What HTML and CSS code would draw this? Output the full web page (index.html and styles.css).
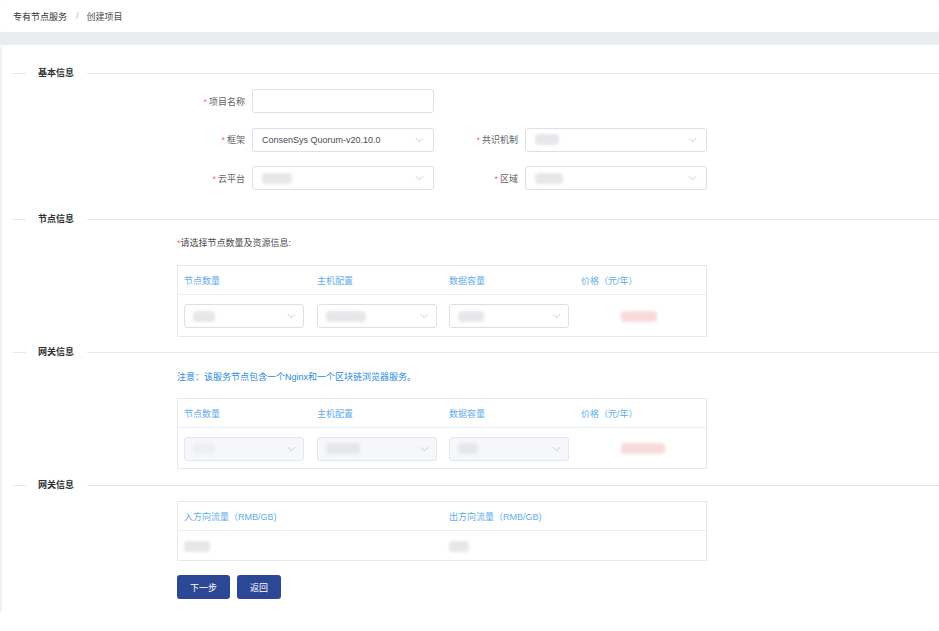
FILE: index.html
```html
<!DOCTYPE html>
<html lang="zh-CN">
<head>
<meta charset="utf-8">
<title>创建项目</title>
<link rel="stylesheet" href="styles.css">
</head>
<body>
<header class="crumb">
  <span class="crumb-a">专有节点服务</span>
  <span class="crumb-sep">/</span>
  <span class="crumb-b">创建项目</span>
</header>
<div class="strip"></div>
<main class="card">
  <div class="sec-title sec-1"><span>基本信息</span></div>

  <div class="form-row">
    <div class="field">
      <label class="lbl lbl-l"><i>*</i>项目名称</label>
      <div class="input"></div>
    </div>
  </div>
  <div class="form-row">
    <div class="field">
      <label class="lbl lbl-l"><i>*</i>框架</label>
      <div class="input select"><span class="val">ConsenSys Quorum-v20.10.0</span><svg class="arrow" viewBox="0 0 10 6"><polyline points="1,1 5,5 9,1"/></svg></div>
    </div>
    <div class="field">
      <label class="lbl lbl-r"><i>*</i>共识机制</label>
      <div class="input select"><span class="blob b-gray w24"></span><svg class="arrow" viewBox="0 0 10 6"><polyline points="1,1 5,5 9,1"/></svg></div>
    </div>
  </div>
  <div class="form-row">
    <div class="field">
      <label class="lbl lbl-l"><i>*</i>云平台</label>
      <div class="input select"><span class="blob b-gray w30"></span><svg class="arrow" viewBox="0 0 10 6"><polyline points="1,1 5,5 9,1"/></svg></div>
    </div>
    <div class="field">
      <label class="lbl lbl-r"><i>*</i>区域</label>
      <div class="input select"><span class="blob b-gray w28"></span><svg class="arrow" viewBox="0 0 10 6"><polyline points="1,1 5,5 9,1"/></svg></div>
    </div>
  </div>

  <div class="sec-title sec-2"><span>节点信息</span></div>
  <div class="block">
    <p class="hint"><i>*</i>请选择节点数量及资源信息:</p>
    <div class="tbl tbl-1">
      <div class="tr th cols4">
        <span>节点数量</span><span>主机配置</span><span>数据容量</span><span>价格（元/年）</span>
      </div>
      <div class="tr td cols4">
        <div class="input select sm"><span class="blob b-gray w22"></span><svg class="arrow" viewBox="0 0 10 6"><polyline points="1,1 5,5 9,1"/></svg></div>
        <div class="input select sm"><span class="blob b-gray w40"></span><svg class="arrow" viewBox="0 0 10 6"><polyline points="1,1 5,5 9,1"/></svg></div>
        <div class="input select sm"><span class="blob b-gray w26"></span><svg class="arrow" viewBox="0 0 10 6"><polyline points="1,1 5,5 9,1"/></svg></div>
        <div class="price"><span class="blob b-pink w36"></span></div>
      </div>
    </div>
  </div>

  <div class="sec-title sec-3"><span>网关信息</span></div>
  <div class="block">
    <p class="note">注意：该服务节点包含一个Nginx和一个区块链浏览器服务。</p>
    <div class="tbl tbl-2">
      <div class="tr th cols4">
        <span>节点数量</span><span>主机配置</span><span>数据容量</span><span>价格（元/年）</span>
      </div>
      <div class="tr td cols4">
        <div class="input select sm dis"><span class="blob b-faint w22"></span><svg class="arrow" viewBox="0 0 10 6"><polyline points="1,1 5,5 9,1"/></svg></div>
        <div class="input select sm dis"><span class="blob b-gray w34"></span><svg class="arrow" viewBox="0 0 10 6"><polyline points="1,1 5,5 9,1"/></svg></div>
        <div class="input select sm dis"><span class="blob b-gray w20"></span><svg class="arrow" viewBox="0 0 10 6"><polyline points="1,1 5,5 9,1"/></svg></div>
        <div class="price"><span class="blob b-pink w44"></span></div>
      </div>
    </div>
  </div>

  <div class="sec-title sec-4"><span>网关信息</span></div>
  <div class="block">
    <div class="tbl tbl-3">
      <div class="tr th cols2">
        <span>入方向流量（RMB/GB)</span><span>出方向流量（RMB/GB)</span>
      </div>
      <div class="tr td cols2 plain">
        <span class="blob b-gray w26"></span><span class="blob b-gray w20"></span>
      </div>
    </div>
    <div class="btns">
      <button class="btn btn-next">下一步</button>
      <button class="btn btn-back">返回</button>
    </div>
  </div>
</main>
</body>
</html>
```

FILE: styles.css
```css
* { box-sizing: border-box; }
html, body { margin: 0; padding: 0; background: #fff; }
body {
  font-family: "Liberation Sans", "Noto Sans CJK SC", sans-serif;
  font-size: 9px;
  color: #606266;
}
i { font-style: normal; color: #f56c6c; }

.crumb {
  height: 32px;
  display: flex;
  align-items: center;
  padding-left: 13px;
  border-radius: 4px;
  background: #fff;
  box-shadow: 0 0 2px rgba(0,0,0,0.06);
}
.crumb-a { color: #303133; }
.crumb-sep { color: #b8bcc4; margin: 0 8px 0 9px; }
.crumb-b { color: #4a4c50; }

.strip { height: 13px; background: #e9edf0; }

.card {
  background: #fff;
  border-left: 2px solid #eef1f4;
  border-top-left-radius: 4px;
  padding: 22px 0 13px 0;
  height: 567px;
}

.sec-title {
  display: flex;
  align-items: center;
  height: 12px;
  line-height: 12px;
  padding-left: 11px;
  font-weight: bold;
  color: #303133;
}
.sec-title::before {
  content: "";
  width: 13px;
  height: 1px;
  background: #e4e7ed;
  margin-right: 12px;
}
.sec-title::after {
  content: "";
  flex: 1;
  height: 1px;
  background: #e4e7ed;
  margin-left: 13px;
}
.sec-2 { margin-top: 23px; }
.sec-3 { margin-top: 9px; }
.sec-4 { margin-top: 10px; }

.form-row { display: flex; margin-top: 10px; }
.form-row + .form-row { margin-top: 14.5px; }
.field { display: flex; align-items: center; }
.lbl { text-align: right; padding-right: 7px; }
.lbl i { margin-right: 2px; }
.lbl-l { width: 250px; }
.lbl-r { width: 91px; }

.input {
  width: 182px;
  height: 24px;
  border: 1px solid #dcdfe6;
  border-radius: 3px;
  background: #fff;
}
.select {
  display: flex;
  align-items: center;
  padding: 0 9px 0 9px;
}
.select .val { color: #4a4c50; font-size: 9px; flex: 1; }
.select .blob { margin-right: auto; }
.arrow {
  width: 9px;
  height: 6px;
  margin-left: auto;
  fill: none;
  stroke: #c0c4cc;
  stroke-width: 0.9;
}
.sm { width: 120px; padding: 0 7px 0 8px; }
.dis { background: #f5f7fa; border-color: #e4e7ed; }

.blob {
  display: inline-block;
  height: 11px;
  border-radius: 4px;
  filter: blur(1.4px);
}
.b-gray { background: #e6e7e9; }
.b-faint { background: #eef0f2; }
.b-pink { background: #f9dada; }
.w20 { width: 20px; } .w22 { width: 22px; } .w24 { width: 24px; }
.w26 { width: 26px; } .w28 { width: 28px; } .w30 { width: 30px; }
.w34 { width: 34px; } .w36 { width: 36px; } .w40 { width: 40px; } .w44 { width: 44px; }

.block { padding-left: 175px; }
.hint { margin: 12px 0 0 0; line-height: 12px; color: #4a4c50; }
.note { margin: 13px 0 0 0; line-height: 12px; color: #2a8ae2; }

.tbl {
  width: 530px;
  border: 1px solid #e6e8ee;
  margin-top: 16px;
}
.tbl-2 { margin-top: 15px; }
.tbl-3 { margin-top: 10px; }
.tr { display: grid; align-items: center; padding-left: 6px; }
.cols4 { grid-template-columns: 133px 132px 132px 1fr; }
.cols2 { grid-template-columns: 265px 1fr; }
.th {
  height: 29px;
  border-bottom: 1px solid #ebeef5;
  color: #5fadee;
}
.td { height: 41px; padding-top: 1px; }
.tbl-2 .td { height: 40px; }
.plain { height: 29px; }
.price { padding-left: 40px; display: flex; }

.btns { display: flex; gap: 7px; margin-top: 14px; }
.btn {
  height: 24px;
  border: none;
  border-radius: 3px;
  background: #2c4895;
  color: #fff;
  font-family: inherit;
  font-size: 9px;
  padding: 0;
}
.btn-next { width: 53px; }
.btn-back { width: 44px; }
```
